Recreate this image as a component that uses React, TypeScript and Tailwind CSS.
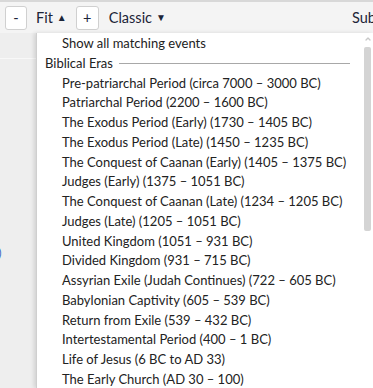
import { ChevronUp } from 'lucide-react';

const eras = [
  'Pre-patriarchal Period (circa 7000 – 3000 BC)',
  'Patriarchal Period (2200 – 1600 BC)',
  'The Exodus Period (Early) (1730 – 1405 BC)',
  'The Exodus Period (Late) (1450 – 1235 BC)',
  'The Conquest of Caanan (Early) (1405 – 1375 BC)',
  'Judges (Early) (1375 – 1051 BC)',
  'The Conquest of Caanan (Late) (1234 – 1205 BC)',
  'Judges (Late) (1205 – 1051 BC)',
  'United Kingdom (1051 – 931 BC)',
  'Divided Kingdom (931 – 715 BC)',
  'Assyrian Exile (Judah Continues) (722 – 605 BC)',
  'Babylonian Captivity (605 – 539 BC)',
  'Return from Exile (539 – 432 BC)',
  'Intertestamental Period (400 – 1 BC)',
  'Life of Jesus (6 BC to AD 33)',
  'The Early Church (AD 30 – 100)',
];

function App() {
  return (
    <div className="h-[388px] w-[373px] overflow-hidden bg-[#eeeeee] text-[#222] font-['Lato','Liberation_Sans',sans-serif] text-[14px]">
      {/* toolbar */}
      <div className="flex h-[33px] items-center border-t-2 border-[#d8d8d8] bg-[#f4f4f4] pl-[5px] text-[14.5px] text-[#1c2538]">
        <button className="flex h-[24px] w-[22px] items-center justify-center rounded-[3px] border border-[#d0d0d0] bg-white">-</button>
        <span className="ml-[9px]">Fit</span>
        <span className="ml-[4px] text-[10px]">▲</span>
        <button className="ml-[9px] flex h-[24px] w-[23px] items-center justify-center rounded-[3px] border border-[#d0d0d0] bg-white">+</button>
        <span className="ml-[10px]">Classic</span>
        <span className="ml-[4px] text-[10px]">▼</span>
        <span className="ml-auto w-[21px] overflow-hidden whitespace-nowrap">Sub</span>
      </div>

      <div className="flex h-[355px]">
        {/* background column */}
        <div className="w-[36px] shrink-0 overflow-hidden">
          <div className="mt-[25px] h-px bg-[#f8f8f8]" />
          <div className="ml-[-22px] mt-[186px] whitespace-nowrap text-[11px] text-[#3060c0]">Late)</div>
        </div>

        {/* dropdown */}
        <div className="flex flex-1 border-l border-[#cfcfcf] bg-white shadow-[-2px_0_4px_rgba(0,0,0,0.12)]">
          <ul className="flex-1 pt-[1px] text-[13px] leading-[19.75px]">
            <li className="pl-[25px]">Show all matching events</li>
            <li className="flex items-center pl-[8px]">
              <span>Biblical Eras</span>
              <span className="ml-[6px] mr-[12px] h-px flex-1 bg-[#a8a8a8]" />
            </li>
            {eras.map((e) => (
              <li key={e} className="whitespace-nowrap pl-[25px]">{e}</li>
            ))}
          </ul>
          <div className="flex w-[11px] flex-col items-center pt-[2px]">
            <ChevronUp className="h-[8px] w-[8px] text-[#c8c8c8]" strokeWidth={4} />
            <div className="mt-[4px] h-[184px] w-[7px] rounded-[2px] bg-[#d4d4d4]" />
          </div>
        </div>
      </div>
    </div>
  );
}

export default App;
